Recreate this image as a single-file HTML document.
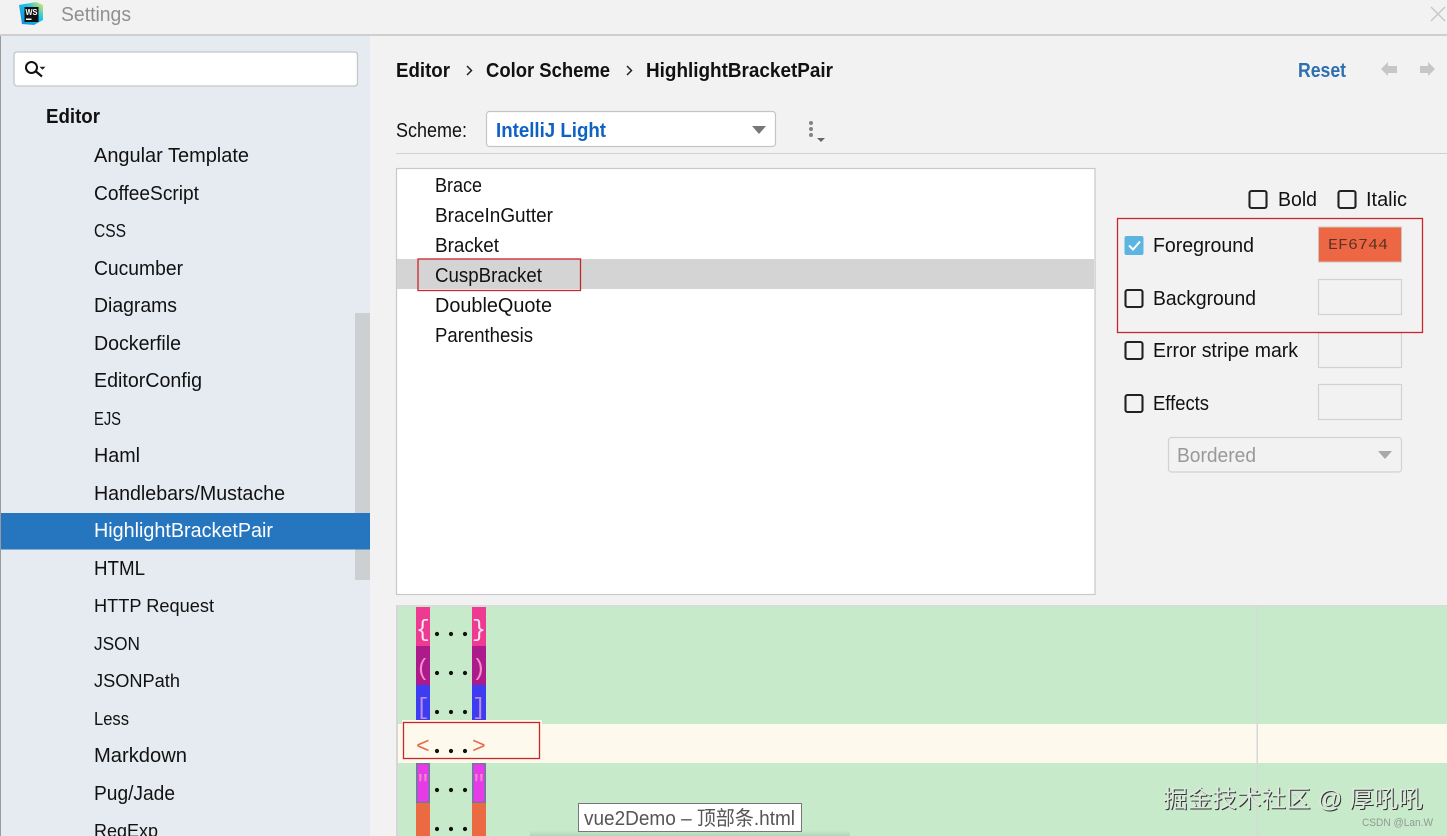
<!DOCTYPE html>
<html><head><meta charset="utf-8"><title>Settings</title>
<style>
html,body{margin:0;padding:0;width:1447px;height:836px;overflow:hidden;background:#f2f2f2}
svg{display:block}
text{font-family:"Liberation Sans","Noto Sans CJK SC",sans-serif;font-size:20px;fill:#111}
.b{font-weight:bold}
.s{font-size:18.5px}
.m{font-family:"Liberation Mono",monospace}
</style></head><body>
<svg width="1447" height="836" viewBox="0 0 1447 836" xmlns="http://www.w3.org/2000/svg">
<defs>
<linearGradient id="ws" x1="0" y1="1" x2="1" y2="0"><stop offset="0" stop-color="#0f86e0"/><stop offset=".6" stop-color="#1cc4e8"/><stop offset="1" stop-color="#f5e94a"/></linearGradient>
<linearGradient id="sh" x1="0" y1="0" x2="0" y2="1"><stop offset="0" stop-color="#c7ebca"/><stop offset="1" stop-color="#b4d6b8"/></linearGradient>
</defs>
<rect width="1447" height="836" fill="#f2f2f2"/>
<!-- title bar -->
<rect x="0" y="34" width="1447" height="2" fill="#cfcfcf"/>
<path d="M19 5 L36 2 L43 5 L43 20 L34 25 L22 24 Z" fill="url(#ws)"/>
<rect x="24.500" y="7" width="14" height="15" fill="#111"/>
<text x="25.500" y="15" class="b" style="font-size:8px;fill:#fff" textLength="12" lengthAdjust="spacingAndGlyphs">WS</text>
<rect x="26" y="18.500" width="5.500" height="1.500" fill="#fff"/>
<text x="61" y="21" style="fill:#909090" textLength="70" lengthAdjust="spacingAndGlyphs">Settings</text>
<path d="M1431 7 L1445 21 M1445 7 L1431 21" stroke="#c8c8c8" stroke-width="1.500" fill="none"/>
<!-- sidebar -->
<rect x="0" y="36" width="370" height="800" fill="#e6ebf1"/>
<rect x="0" y="36" width="1" height="800" fill="#9a9a9a"/>
<rect x="14" y="52" width="343.500" height="34" rx="3" fill="#fff" stroke="#c4c6c8" stroke-width="1.300"/>
<circle cx="31.500" cy="67.500" r="5.500" fill="none" stroke="#111" stroke-width="2"/>
<path d="M36 71.500 L42 76.500" stroke="#111" stroke-width="2.200"/>
<path d="M39.500 66.800 L45.500 66.800 L42.500 69.800 Z" fill="#222"/>
<text x="46" y="123" class="b" textLength="54" lengthAdjust="spacingAndGlyphs">Editor</text>
<rect x="355" y="313" width="15" height="267" fill="#cdd0d3"/>
<rect x="1" y="513" width="369" height="36.500" fill="#2675bf"/>
<g>
<text x="94" y="162" textLength="155" lengthAdjust="spacingAndGlyphs">Angular Template</text>
<text x="94" y="200" textLength="105" lengthAdjust="spacingAndGlyphs">CoffeeScript</text>
<text x="94" y="237" class="s" textLength="32" lengthAdjust="spacingAndGlyphs">CSS</text>
<text x="94" y="275" textLength="89" lengthAdjust="spacingAndGlyphs">Cucumber</text>
<text x="94" y="312" textLength="83" lengthAdjust="spacingAndGlyphs">Diagrams</text>
<text x="94" y="350" textLength="87" lengthAdjust="spacingAndGlyphs">Dockerfile</text>
<text x="94" y="387" textLength="108" lengthAdjust="spacingAndGlyphs">EditorConfig</text>
<text x="94" y="425" class="s" textLength="27" lengthAdjust="spacingAndGlyphs">EJS</text>
<text x="94" y="462" textLength="46" lengthAdjust="spacingAndGlyphs">Haml</text>
<text x="94" y="500" textLength="191" lengthAdjust="spacingAndGlyphs">Handlebars/Mustache</text>
<text x="94" y="537" style="fill:#fff" textLength="179" lengthAdjust="spacingAndGlyphs">HighlightBracketPair</text>
<text x="94" y="575" textLength="51" lengthAdjust="spacingAndGlyphs">HTML</text>
<text x="94" y="612" class="s" textLength="120" lengthAdjust="spacingAndGlyphs">HTTP Request</text>
<text x="94" y="650" class="s" textLength="46" lengthAdjust="spacingAndGlyphs">JSON</text>
<text x="94" y="687" class="s" textLength="86" lengthAdjust="spacingAndGlyphs">JSONPath</text>
<text x="94" y="725" class="s" textLength="35" lengthAdjust="spacingAndGlyphs">Less</text>
<text x="94" y="762" textLength="93" lengthAdjust="spacingAndGlyphs">Markdown</text>
<text x="94" y="800" textLength="81" lengthAdjust="spacingAndGlyphs">Pug/Jade</text>
<text x="94" y="837" class="s" textLength="64" lengthAdjust="spacingAndGlyphs">RegExp</text>
</g>
<!-- breadcrumb -->
<text x="396" y="77" class="b" textLength="54" lengthAdjust="spacingAndGlyphs">Editor</text>
<path d="M467 66 L471.500 70.500 L467 75" stroke="#222" stroke-width="1.500" fill="none"/>
<text x="486" y="77" class="b" textLength="124" lengthAdjust="spacingAndGlyphs">Color Scheme</text>
<path d="M627 66 L631.500 70.500 L627 75" stroke="#222" stroke-width="1.500" fill="none"/>
<text x="646" y="77" class="b" textLength="187" lengthAdjust="spacingAndGlyphs">HighlightBracketPair</text>
<text x="1298" y="77" class="b" style="fill:#2f6fb0" textLength="48" lengthAdjust="spacingAndGlyphs">Reset</text>
<path d="M1381 69 L1388 62 L1388 66 L1397 66 L1397 73 L1388 73 L1388 76 Z" fill="#c6c6c6"/>
<path d="M1435 69 L1428 62 L1428 66 L1420 66 L1420 73 L1428 73 L1428 76 Z" fill="#c6c6c6"/>
<!-- scheme -->
<text x="396" y="137" textLength="71" lengthAdjust="spacingAndGlyphs">Scheme:</text>
<rect x="486.500" y="111.500" width="289" height="35" rx="3" fill="#fff" stroke="#c2c6ca" stroke-width="1.200"/>
<text x="496" y="137" class="b" style="fill:#0f62c4" textLength="110" lengthAdjust="spacingAndGlyphs">IntelliJ Light</text>
<path d="M752 126 L766 126 L759 134 Z" fill="#777"/>
<circle cx="811" cy="123" r="2" fill="#7f8488"/><circle cx="811" cy="129" r="2" fill="#7f8488"/><circle cx="811" cy="135" r="2" fill="#7f8488"/>
<path d="M817 138 L825 138 L821 142 Z" fill="#666"/>
<rect x="396" y="153" width="1051" height="1" fill="#d2d2d2"/>
<!-- list -->
<rect x="396.500" y="168.500" width="698.500" height="426" fill="#fff" stroke="#c8c8c8" stroke-width="1.200"/>
<rect x="397" y="259" width="697" height="30" fill="#d4d4d4"/>
<text x="435" y="192" textLength="47" lengthAdjust="spacingAndGlyphs">Brace</text>
<text x="435" y="222" textLength="118" lengthAdjust="spacingAndGlyphs">BraceInGutter</text>
<text x="435" y="252" textLength="64" lengthAdjust="spacingAndGlyphs">Bracket</text>
<text x="435" y="282" textLength="107" lengthAdjust="spacingAndGlyphs">CuspBracket</text>
<text x="435" y="312" textLength="117" lengthAdjust="spacingAndGlyphs">DoubleQuote</text>
<text x="435" y="342" textLength="98" lengthAdjust="spacingAndGlyphs">Parenthesis</text>
<rect x="418" y="259" width="162.500" height="31.500" fill="none" stroke="#c9252c" stroke-width="1.300"/>
<!-- right panel -->
<g fill="none" stroke="#222" stroke-width="2.100">
<rect x="1249.500" y="191" width="17" height="17" rx="2"/>
<rect x="1338.500" y="191" width="17" height="17" rx="2"/>
<rect x="1125.500" y="290" width="17" height="17" rx="2"/>
<rect x="1125.500" y="342" width="17" height="17" rx="2"/>
<rect x="1125.500" y="395" width="17" height="17" rx="2"/>
</g>
<rect x="1124.500" y="236" width="19" height="19" rx="2" fill="#5cb4e0"/>
<path d="M1129 245.500 L1133 249.500 L1140 241.500" fill="none" stroke="#fff" stroke-width="2"/>
<text x="1278" y="206" textLength="39" lengthAdjust="spacingAndGlyphs">Bold</text>
<text x="1366" y="206" textLength="41" lengthAdjust="spacingAndGlyphs">Italic</text>
<text x="1153" y="252" textLength="101" lengthAdjust="spacingAndGlyphs">Foreground</text>
<text x="1153" y="305" textLength="103" lengthAdjust="spacingAndGlyphs">Background</text>
<text x="1153" y="357" textLength="145" lengthAdjust="spacingAndGlyphs">Error stripe mark</text>
<text x="1153" y="410" textLength="56" lengthAdjust="spacingAndGlyphs">Effects</text>
<rect x="1318.500" y="227" width="83" height="35" fill="#ee6744" stroke="#d0c4c0"/>
<text x="1328" y="249" class="m" style="font-size:14.5px;fill:#5e3224" textLength="60" lengthAdjust="spacingAndGlyphs">EF6744</text>
<g fill="#f2f2f2" stroke="#d2d2d2" stroke-width="1.200">
<rect x="1318.500" y="279.500" width="83" height="35"/>
<rect x="1318.500" y="333" width="83" height="34.500"/>
<rect x="1318.500" y="384.500" width="83" height="35"/>
<rect x="1168.500" y="437.500" width="233" height="34.500" rx="3"/>
</g>
<text x="1177" y="462" style="fill:#999" textLength="79" lengthAdjust="spacingAndGlyphs">Bordered</text>
<path d="M1378 451 L1392 451 L1385 459 Z" fill="#a8a8a8"/>
<rect x="1117.500" y="218.500" width="305" height="114" fill="none" stroke="#c9252c" stroke-width="1.300"/>
<!-- preview -->
<rect x="396" y="606" width="1051" height="230" fill="#c7ebca"/>
<rect x="396" y="605" width="1051" height="1.500" fill="#dadada"/>
<rect x="396" y="606" width="2" height="230" fill="#d6d6d6"/>
<rect x="530" y="830" width="320" height="6" fill="url(#sh)"/>
<rect x="416" y="607" width="14" height="39" fill="#ee3a91"/>
<rect x="472" y="607" width="14" height="39" fill="#ee3a91"/>
<rect x="416" y="646" width="14" height="39" fill="#ad1a8c"/>
<rect x="472" y="646" width="14" height="39" fill="#ad1a8c"/>
<rect x="416" y="685" width="14" height="36" fill="#3c3cf0"/>
<rect x="472" y="685" width="14" height="36" fill="#3c3cf0"/>
<rect x="416.750" y="763.500" width="12.500" height="39" fill="#e63be6" stroke="#5f8296" stroke-width="1.500"/>
<rect x="472.750" y="763.500" width="12.500" height="39" fill="#e63be6" stroke="#5f8296" stroke-width="1.500"/>
<rect x="416" y="803" width="14" height="33" fill="#ec6a42"/>
<rect x="472" y="803" width="14" height="33" fill="#ec6a42"/>
<rect x="398" y="724" width="1049" height="39" fill="#fdf9ec"/>
<rect x="402" y="720" width="140" height="42" fill="#fdf9ec"/>
<rect x="1256.500" y="606" width="1.500" height="230" fill="#d8d8d8"/>
<rect x="403.500" y="722.500" width="136" height="36" fill="none" stroke="#c9252c" stroke-width="1.300"/>
<text x="416" y="636" class="m" style="font-size:23px;fill:#ffe9f2">{</text>
<text x="472" y="636" class="m" style="font-size:23px;fill:#ffe9f2">}</text>
<text x="416" y="675" class="m" style="font-size:23px;fill:#f590c8">(</text>
<text x="472" y="675" class="m" style="font-size:23px;fill:#f590c8">)</text>
<text x="416" y="714" class="m" style="font-size:23px;fill:#c08ae8">[</text>
<text x="472" y="714" class="m" style="font-size:23px;fill:#c08ae8">]</text>
<text x="416" y="753" class="m" style="font-size:23px;fill:#e86a48">&lt;</text>
<text x="472" y="753" class="m" style="font-size:23px;fill:#e86a48">&gt;</text>
<text x="416" y="791" class="m" style="font-size:23px;fill:#f08ac8">"</text>
<text x="472" y="791" class="m" style="font-size:23px;fill:#f08ac8">"</text>
<g fill="#111">
<circle cx="437" cy="634" r="2.100"/><circle cx="451" cy="634" r="2.100"/><circle cx="465" cy="634" r="2.100"/>
<circle cx="437" cy="673" r="2.100"/><circle cx="451" cy="673" r="2.100"/><circle cx="465" cy="673" r="2.100"/>
<circle cx="437" cy="712" r="2.100"/><circle cx="451" cy="712" r="2.100"/><circle cx="465" cy="712" r="2.100"/>
<circle cx="437" cy="751" r="2.100"/><circle cx="451" cy="751" r="2.100"/><circle cx="465" cy="751" r="2.100"/>
<circle cx="437" cy="790" r="2.100"/><circle cx="451" cy="790" r="2.100"/><circle cx="465" cy="790" r="2.100"/>
<circle cx="437" cy="829" r="2.100"/><circle cx="451" cy="829" r="2.100"/><circle cx="465" cy="829" r="2.100"/>
</g>
<!-- tooltip -->
<rect x="578.500" y="803.500" width="223" height="28" fill="#fff" stroke="#777"/>
<text x="584" y="825" style="fill:#555" textLength="211" lengthAdjust="spacingAndGlyphs">vue2Demo – 顶部条.html</text>
<!-- watermark -->
<text x="1164" y="808" style="font-size:24px;fill:#333" textLength="260" lengthAdjust="spacingAndGlyphs">掘金技术社区 @ 厚吼吼</text>
<text x="1163" y="807" style="font-size:24px;fill:#dfe8df" textLength="260" lengthAdjust="spacingAndGlyphs">掘金技术社区 @ 厚吼吼</text>
<text x="1362" y="826" style="font-size:11px;fill:#8f9a92" textLength="71" lengthAdjust="spacingAndGlyphs">CSDN @Lan.W</text>
</svg>
</body></html>
